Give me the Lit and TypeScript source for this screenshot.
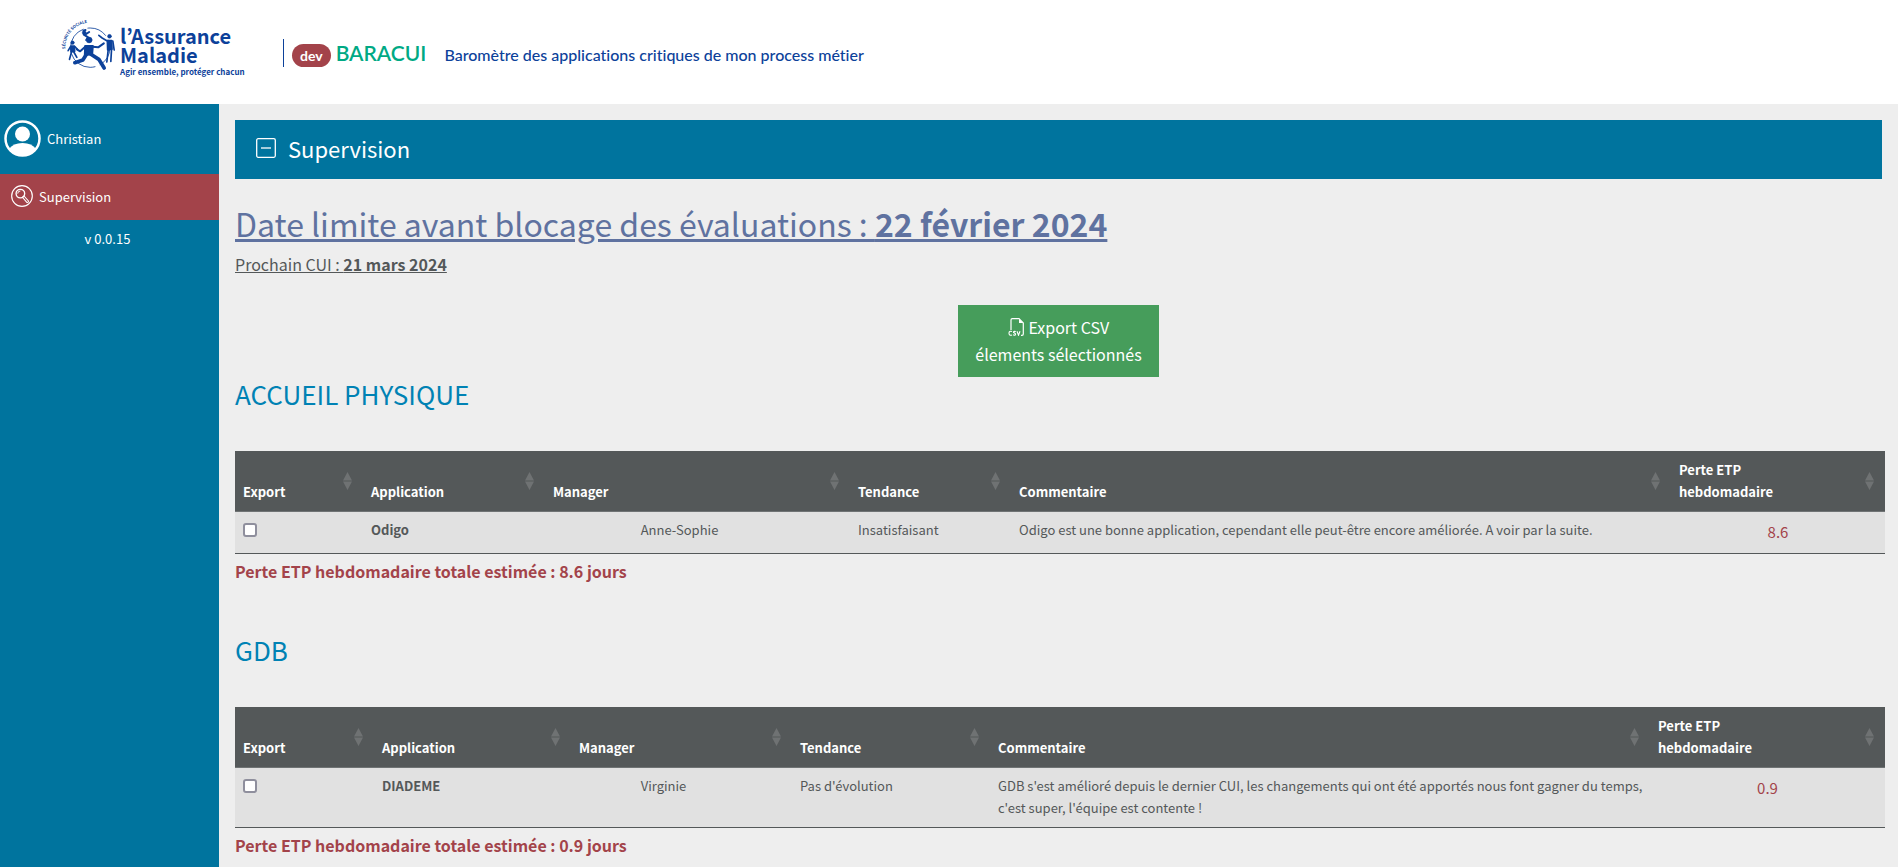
import { LitElement, html, css, svg } from "lit";
import { customElement, property, state } from "lit/decorators.js";

interface Row {
  id: string;
  application: string;
  manager: string;
  tendance: string;
  commentaire: string;
  perte: string;
}

interface Domain {
  title: string;
  total: string;
  widths: number[];
  rows: Row[];
}

const DOMAINS: Domain[] = [
  {
    title: "ACCUEIL PHYSIQUE",
    total: "8.6",
    widths: [128, 182, 305, 161, 660, 214],
    rows: [
      {
        id: "odigo",
        application: "Odigo",
        manager: "Anne-Sophie",
        tendance: "Insatisfaisant",
        commentaire:
          "Odigo est une bonne application, cependant elle peut-être encore améliorée. A voir par la suite.",
        perte: "8.6",
      },
    ],
  },
  {
    title: "GDB",
    total: "0.9",
    widths: [139, 197, 221, 198, 660, 235],
    rows: [
      {
        id: "diademe",
        application: "DIADEME",
        manager: "Virginie",
        tendance: "Pas d'évolution",
        commentaire:
          "GDB s'est amélioré depuis le dernier CUI, les changements qui ont été apportés nous font gagner du temps, c'est super, l'équipe est contente !",
        perte: "0.9",
      },
    ],
  },
];

const emblem = svg`
  <defs><path id="arc" d="M45 117 A76 76 0 0 1 128 38" /></defs>
  <circle cx="120" cy="113" r="59" fill="none" stroke="currentColor" stroke-width="2.5" stroke-dasharray="62 14 90 10 80 12" />
  <text fill="currentColor" font-size="12" font-weight="700"><textPath href="#arc">SÉCURITÉ SOCIALE</textPath></text>
  <g fill="currentColor" stroke="currentColor" stroke-linecap="round" stroke-linejoin="round">
    <circle cx="117" cy="90" r="9" />
    <path d="M105 108 L128 108 L126 132 L104 136 Z" stroke-width="6" />
    <path d="M107 109 L90 124 L80 118" fill="none" stroke-width="6" />
    <path d="M127 110 L144 112 L161 100" fill="none" stroke-width="6" />
    <path d="M108 134 L98 150 L74 158" fill="none" stroke-width="11" />
    <path d="M121 132 L146 148 L162 174" fill="none" stroke-width="11" />
    <circle cx="67" cy="98" r="5.5" />
    <path d="M62 108 L73 108 L74 124 L62 126 Z" stroke-width="4" />
    <path d="M61 110 L54 122 M74 110 L82 118 M64 126 L58 148 M71 126 L80 142" fill="none" stroke-width="5" />
    <circle cx="178" cy="79" r="6" />
    <path d="M171 91 L185 91 L186 118 L172 120 Z" stroke-width="4" />
    <path d="M170 92 L156 84 L146 76 M188 93 L192 120 M174 120 L170 156 M184 120 L182 154" fill="none" stroke-width="5" />
    <circle cx="102" cy="68" r="6" />
    <path d="M101 74 L114 82 L108 90 M108 72 L117 66 M100 62 L106 60 M112 84 L118 88" fill="none" stroke-width="6" />
  </g>
`;

@customElement("domain-table")
export class DomainTable extends LitElement {
  @property({ attribute: false }) domain!: Domain;
  @state() private checked = new Set<string>();

  static styles = css`
    :host {
      display: block;
    }
    .title {
      margin: 0 0 40px;
      font-size: 26px;
      line-height: 34px;
      font-weight: 400;
      color: #0082b4;
    }
    .scroll {
      margin-right: -3px;
    }
    .table {
      width: 100%;
      table-layout: fixed;
      border-collapse: collapse;
      border-bottom: 1px solid #545859;
      font-size: 13px;
      line-height: 22px;
    }
    .head {
      padding: 8px 11px 8px 8px;
      height: 44px;
      background: #545859;
      border-bottom: 1px solid #6f7374;
      color: #fff;
      text-align: left;
      vertical-align: bottom;
    }
    .sort {
      display: flex;
      align-items: flex-end;
      justify-content: space-between;
      width: 100%;
      height: 44px;
      padding: 0;
      border: 0;
      background: none;
      color: inherit;
      font: inherit;
      font-weight: 700;
      text-align: left;
      cursor: pointer;
    }
    .arrows {
      align-self: center;
      width: 9px;
      height: 18px;
      fill: #6f7273;
    }
    .cell {
      padding: 7px 4px 8px 8px;
      background: #e1e1e1;
      vertical-align: top;
      text-align: left;
      font-weight: 400;
    }
    .name {
      font-weight: 700;
    }
    .manager {
      padding-right: 44px;
      text-align: center;
    }
    .loss {
      padding-right: 8px;
      font-size: 15px;
      line-height: 26px;
      text-align: center;
      color: #a3434a;
    }
    .check {
      display: block;
      appearance: none;
      width: 14px;
      height: 14px;
      margin: 4px 0 0;
      border: 2px solid #8f8f9d;
      border-radius: 3px;
      background: #fff;
    }
    .check:checked {
      background: #00749e;
    }
    .total {
      margin: 4px 0 0;
      font-size: 16px;
      line-height: 27px;
      font-weight: 700;
      color: #a3434a;
    }
  `;

  private toggle(id: string) {
    const next = new Set(this.checked);
    next.has(id) ? next.delete(id) : next.add(id);
    this.checked = next;
  }

  private header(label: unknown) {
    return html`<th class="head" scope="col">
      <button class="sort" type="button">
        <span>${label}</span>
        <svg class="arrows" viewBox="0 0 9 18" aria-hidden="true">
          <path d="M4.5 0 L9 8.5 H0 Z M0 9.5 H9 L4.5 18 Z" />
        </svg>
      </button>
    </th>`;
  }

  render() {
    const { title, total, widths, rows } = this.domain;
    const sum = widths.reduce((a, b) => a + b, 0);
    return html`
      <h2 class="title">${title}</h2>
      <div class="scroll">
        <table class="table">
          <colgroup>
            ${widths.map((w) => html`<col style="width:${(w / sum) * 100}%" />`)}
          </colgroup>
          <thead>
            <tr>
              ${["Export", "Application", "Manager", "Tendance", "Commentaire"].map((l) => this.header(l))}
              ${this.header(html`Perte ETP<br />hebdomadaire`)}
            </tr>
          </thead>
          <tbody>
            ${rows.map(
              (r) => html`<tr>
                <td class="cell">
                  <input
                    class="check"
                    type="checkbox"
                    aria-label="Exporter ${r.application}"
                    .checked=${this.checked.has(r.id)}
                    @change=${() => this.toggle(r.id)}
                  />
                </td>
                <th class="cell name" scope="row">${r.application}</th>
                <td class="cell manager">${r.manager}</td>
                <td class="cell">${r.tendance}</td>
                <td class="cell">${r.commentaire}</td>
                <td class="cell loss">${r.perte}</td>
              </tr>`
            )}
          </tbody>
        </table>
      </div>
      <p class="total">Perte ETP hebdomadaire totale estimée : ${total} jours</p>
    `;
  }
}

@customElement("app-root")
export class AppRoot extends LitElement {
  static styles = css`
    :host {
      display: flex;
      flex-direction: column;
      min-height: 100vh;
      background: #eee;
      color: #545859;
      font-family: "Noto Sans CJK JP", "Noto Sans", sans-serif;
      font-size: 13px;
      line-height: 22px;
    }
    .top {
      display: flex;
      align-items: flex-start;
      height: 104px;
      box-sizing: border-box;
      padding: 18px 62px 0;
      background: #fff;
      color: #0c419a;
    }
    .logo {
      display: flex;
      gap: 3px;
      width: 221px;
      color: inherit;
      text-decoration: none;
    }
    .emblem {
      flex: none;
      width: 55px;
      height: 52px;
      overflow: visible;
    }
    .brand {
      display: flex;
      flex-direction: column;
      padding-top: 8px;
      font-size: 20px;
      line-height: 19px;
      font-weight: 700;
      white-space: nowrap;
    }
    .motto {
      font-size: 8px;
      line-height: 16px;
    }
    .product {
      display: flex;
      align-items: center;
      height: 28px;
      margin-top: 21px;
      padding-left: 8px;
      border-left: 1px solid #0c419a;
      font-family: Lato, sans-serif;
      font-variant-ligatures: none;
    }
    .env {
      padding: 0 8px;
      border-radius: 12px;
      background: #a3434a;
      color: #fff;
      font-size: 14px;
      line-height: 23px;
      font-weight: 700;
      margin: 5px 5px 0 0;
    }
    .app {
      font-size: 21px;
      line-height: 28px;
      color: #00a984;
      font-weight: 600;
    }
    .tagline {
      margin: 4px 0 0 18px;
      font-size: 16px;
      line-height: 24px;
      font-weight: 500;
    }
    .body {
      flex: 1;
      display: flex;
    }
    .side {
      flex: none;
      width: 219px;
      background: #00749e;
      color: #fff;
    }
    .user {
      display: flex;
      align-items: center;
      gap: 6px;
      padding: 16px 4px 17px;
    }
    .avatar {
      width: 37px;
      height: 37px;
    }
    .link {
      display: flex;
      align-items: center;
      gap: 6px;
      height: 46px;
      padding: 0 11px;
      background: #a3434a;
      color: #fff;
      text-decoration: none;
    }
    .glass {
      width: 22px;
      height: 22px;
      margin-bottom: 3px;
    }
    .version {
      margin: 8px 4px 0 0;
      text-align: center;
    }
    .main {
      flex: 1;
      min-width: 0;
      padding: 16px 16px 0;
    }
    .band {
      display: flex;
      align-items: center;
      gap: 12px;
      height: 59px;
      box-sizing: border-box;
      padding: 0 21px 3px;
      background: #00749e;
      color: #fff;
      font-size: 22px;
      line-height: 32px;
    }
    .fold {
      display: flex;
      padding: 0;
      border: 0;
      background: none;
      color: inherit;
    }
    .minus {
      width: 20px;
      height: 20px;
    }
    .band-title {
      margin: 0;
      font: inherit;
    }
    .deadline {
      margin: 23px 0 0;
      font-size: 32px;
      line-height: 43px;
      font-weight: 400;
      color: #5f72a0;
      text-decoration: underline;
    }
    .next {
      margin: 6px 0 0;
      font-size: 16px;
      line-height: 27px;
      text-decoration: underline;
    }
    .bold {
      font-weight: 700;
    }
    .export {
      display: block;
      margin: 27px auto 0;
      padding: 9px 17px;
      border: 0;
      background: #469d5b;
      color: #fff;
      font-family: inherit;
      font-size: 16px;
      line-height: 27px;
      text-align: center;
    }
    .csv {
      width: 17px;
      height: 18px;
      vertical-align: -2px;
    }
    .domain + .domain {
      margin-top: 48px;
    }
  `;

  render() {
    return html`
      <header class="top">
        <a class="logo" href="#">
          <svg class="emblem" viewBox="36 24 164 156" aria-hidden="true">${emblem}</svg>
          <span class="brand">
            <span>l’Assurance</span>
            <span>Maladie</span>
            <span class="motto">Agir ensemble, protéger chacun</span>
          </span>
        </a>
        <div class="product">
          <span class="env">dev</span>
          <span class="app">BARACUI</span>
          <span class="tagline">Baromètre des applications critiques de mon process métier</span>
        </div>
      </header>
      <div class="body">
        <nav class="side">
          <div class="user">
            <svg class="avatar" viewBox="0 0 37 37" aria-hidden="true">
              <circle cx="18.5" cy="18.5" r="17" fill="none" stroke="#fff" stroke-width="2.5" />
              <circle cx="18.5" cy="14" r="7.5" fill="#fff" />
              <path d="M5 29 Q9 23 18.5 23 T32 29 Q27 36 18.5 36 T5 29 Z" fill="#fff" />
            </svg>
            <span>Christian</span>
          </div>
          <a class="link" href="#">
            <svg class="glass" viewBox="0 0 23 23" fill="none" stroke="#fff" aria-hidden="true">
              <circle cx="11.5" cy="11.5" r="10.8" stroke-width="1.2" />
              <circle cx="9.8" cy="9" r="4.5" stroke-width="1.4" />
              <path d="M7 9 A2.8 2.8 0 0 1 9.8 6.3" stroke-width="1" />
              <path d="M12 12.8 L13.6 11.4 L18.2 16.6 Q18.6 18.4 16.6 18.2 Z" stroke-width="1.1" />
            </svg>
            <span>Supervision</span>
          </a>
          <p class="version">v 0.0.15</p>
        </nav>
        <main class="main">
          <div class="band">
            <button class="fold" type="button" aria-label="Replier">
              <svg class="minus" viewBox="0 0 20 20" fill="none" stroke="currentColor" aria-hidden="true">
                <rect x="0.7" y="0.7" width="18.6" height="18.6" rx="1.5" stroke-width="1.3" />
                <path d="M5 10 H15" stroke-width="1.3" />
              </svg>
            </button>
            <h1 class="band-title">Supervision</h1>
          </div>
          <h2 class="deadline">
            Date limite avant blocage des évaluations : <span class="bold">22 février 2024</span>
          </h2>
          <p class="next">Prochain CUI : <span class="bold">21 mars 2024</span></p>
          <button class="export" type="button">
            <svg class="csv" viewBox="0 0 17 18" aria-hidden="true">
              <path d="M3 12 V2 Q3 0.7 4.3 0.7 H11 L15.3 5 V16 Q15.3 17.3 14 17.3 H13" fill="none" stroke="#fff" stroke-width="1.2" />
              <path d="M11 0.7 V5 H15.3 Z" fill="#fff" />
              <path d="M4 13.5 Q1 12.6 1 15.2 T4 17 M7.8 13.5 Q5 13 5.6 14.6 Q8 15.6 7.4 16.8 Q6.4 17.6 5 16.8 M9 13.2 L10.5 17.2 L12 13.2" fill="none" stroke="#fff" stroke-width="1.1" />
            </svg>
            Export CSV<br />élements sélectionnés
          </button>
          ${DOMAINS.map((d) => html`<domain-table class="domain" .domain=${d}></domain-table>`)}
        </main>
      </div>
    `;
  }
}
